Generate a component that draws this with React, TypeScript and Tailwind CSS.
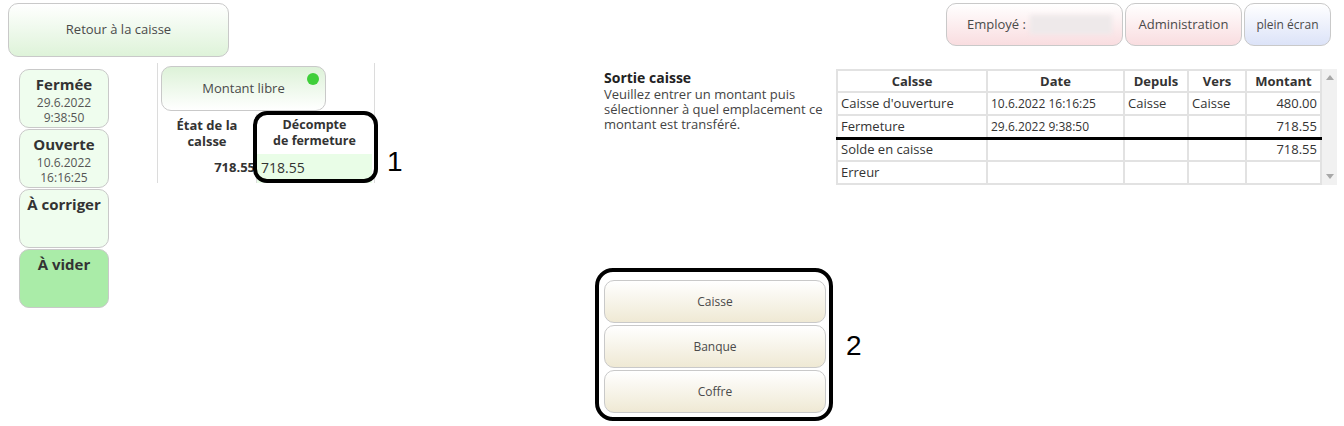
import React from 'react';

const statusItems = [
  { title: 'Fermée', lines: ['29.6.2022', '9:38:50'], active: false },
  { title: 'Ouverte', lines: ['10.6.2022', '16:16:25'], active: false },
  { title: 'À corriger', lines: [], active: false },
  { title: 'À vider', lines: [], active: true },
];

const rows = [
  { caisse: "Caisse d'ouverture", date: '10.6.2022 16:16:25', depuis: 'Caisse', vers: 'Caisse', montant: '480.00' },
  { caisse: 'Fermeture', date: '29.6.2022 9:38:50', depuis: '', vers: '', montant: '718.55' },
  { caisse: 'Solde en caisse', date: '', depuis: '', vers: '', montant: '718.55', thick: true },
  { caisse: 'Erreur', date: '', depuis: '', vers: '', montant: '' },
];

const cell = 'border-2 border-[#e2e2e2] px-[3px]';

export default function App() {
  return (
    <div className="relative w-[1344px] h-[426px] overflow-hidden bg-white text-[#333] font-['Open_Sans','Noto_Sans',sans-serif]">
      {/* header */}
      <div className="flex items-start justify-between h-[57px]">
        <button className="ml-[8px] mt-[3px] w-[221px] h-[54px] rounded-[10px] border border-[#c9c9c9] bg-linear-to-b from-white to-[#def3d9] text-[13px] text-[#4a4a4a]">
          Retour à la caisse
        </button>
        <div className="mt-[3px] mr-[13px] flex gap-[2px]">
          <button className="w-[177px] h-[43px] rounded-[10px] border border-[#c9c9c9] bg-linear-to-b from-white to-[#f9dde0] text-[13px] text-[#4a4a4a] flex items-center pl-[20px] gap-[4px]">
            Employé :
            <span className="inline-block w-[82px] h-[19px] bg-[#eee9ea] blur-[2px]" />
          </button>
          <button className="w-[117px] h-[43px] rounded-[10px] border border-[#c9c9c9] bg-linear-to-b from-white to-[#f9dde0] text-[13px] text-[#4a4a4a]">
            Administration
          </button>
          <button className="w-[87px] h-[43px] rounded-[10px] border border-[#c9c9c9] bg-linear-to-b from-white to-[#dce3f8] text-[12px] text-[#4a4a4a]">
            plein écran
          </button>
        </div>
      </div>

      <div className="flex mt-[6px]">
        {/* status column */}
        <div className="ml-[19px] mt-[6px] w-[90px] flex flex-col gap-px">
          {statusItems.map((s) => (
            <div
              key={s.title}
              className={`h-[59px] rounded-[10px] border border-[#c9c9c9] flex flex-col items-center pt-[3px] ${s.active ? 'bg-[#aaeca8]' : 'bg-[#effdee]'}`}
            >
              <span className="text-[15px] font-bold leading-[22px] text-[#333]">{s.title}</span>
              {s.lines.map((l) => (
                <span key={l} className="text-[12px] leading-[15px] text-[#555] first-of-type:mt-[2px]">{l}</span>
              ))}
            </div>
          ))}
        </div>

        {/* middle panel */}
        <div className="relative ml-[48px] w-[218px] h-[120px] border-l border-r border-[#dcdcdc]">
          <button className="relative ml-[3px] mt-[3px] w-[165px] h-[45px] rounded-[10px] border border-[#c9c9c9] bg-linear-to-b from-[#ddf2d8] to-white text-[13px] text-[#4a4a4a]">
            Montant libre
            <span className="absolute right-[6px] top-[6px] w-[12px] h-[12px] rounded-full bg-[#3fcf3a]" />
          </button>
          <div className="flex mt-[3px]">
            <div className="w-[99px] border-r border-[#dcdcdc] flex flex-col">
              <div className="h-[38px] text-[13px] font-bold leading-[16px] text-center pt-[3px]">
                État de la<br />calsse
              </div>
              <div className="h-[31px] text-[13px] font-bold text-right pr-[1px] pt-[6px]">718.55</div>
            </div>
            <div className="w-[115px] flex flex-col">
              <div className="h-[38px] text-[12.5px] font-bold leading-[16px] text-center pt-[3px]">
                Décompte<br />de fermeture
              </div>
              <div className="h-[29px] mt-[2px] bg-[#e9fde7] text-[14px] text-[#333] pl-[4px] pt-[3px]">718.55</div>
            </div>
          </div>
          {/* annotation 1 */}
          <div className="absolute left-[95px] top-[48px] w-[125px] h-[72px] rounded-[14px] border-[4px] border-black pointer-events-none" />
          <span className="absolute left-[229px] top-[85px] text-[28px] leading-none text-black font-['Liberation_Sans',sans-serif]">1</span>
        </div>

        {/* right side */}
        <div className="ml-[229px] flex flex-col">
          <div className="flex mt-[6px]">
            <div className="w-[232px]">
              <div className="text-[14px] font-bold leading-[18px] text-[#222]">Sortie caisse</div>
              <p className="text-[13px] leading-[15px] text-[#444]">
                Veuillez entrer un montant puis sélectionner à quel emplacement ce montant est transféré.
              </p>
            </div>
            <div className="flex">
              <table className="w-[486px] border-collapse text-[13px] text-[#333] leading-[15px]">
                <thead>
                  <tr className="h-[22px]">
                    <th className={`${cell} w-[150px] font-bold text-center`}>Calsse</th>
                    <th className={`${cell} w-[137px] font-bold text-center`}>Date</th>
                    <th className={`${cell} w-[64px] font-bold text-center`}>Depuls</th>
                    <th className={`${cell} w-[58px] font-bold text-center`}>Vers</th>
                    <th className={`${cell} font-bold text-center`}>Montant</th>
                  </tr>
                </thead>
                <tbody>
                  {rows.map((r) => (
                    <tr key={r.caisse} className="h-[23px]">
                      <td className={`${cell} ${r.thick ? 'border-t-black border-t-[3px]' : ''}`}>{r.caisse}</td>
                      <td className={`${cell} text-[12px] ${r.thick ? 'border-t-black border-t-[3px]' : ''}`}>{r.date}</td>
                      <td className={`${cell} ${r.thick ? 'border-t-black border-t-[3px]' : ''}`}>{r.depuis}</td>
                      <td className={`${cell} ${r.thick ? 'border-t-black border-t-[3px]' : ''}`}>{r.vers}</td>
                      <td className={`${cell} text-right ${r.thick ? 'border-t-black border-t-[3px]' : ''}`}>{r.montant}</td>
                    </tr>
                  ))}
                </tbody>
              </table>
              <div className="w-[15px] h-[116px] bg-[#f1f1f1] flex flex-col justify-between items-center py-[6px]">
                <svg width="8" height="5" viewBox="0 0 8 5"><path d="M0 5 L4 0 L8 5 Z" fill="#a8a8a8" /></svg>
                <svg width="8" height="5" viewBox="0 0 8 5"><path d="M0 0 L4 5 L8 0 Z" fill="#a8a8a8" /></svg>
              </div>
            </div>
          </div>

          <div className="relative mt-[95px] w-[222px] flex flex-col gap-[2px]">
            {['Caisse', 'Banque', 'Coffre'].map((b) => (
              <button
                key={b}
                className="h-[43px] rounded-[10px] border border-[#c9c9c9] bg-linear-to-b from-white to-[#efe9d4] text-[12px] text-[#4a4a4a]"
              >
                {b}
              </button>
            ))}
            {/* annotation 2 */}
            <div className="absolute -left-[9px] -top-[12px] w-[238px] h-[153px] rounded-[18px] border-[4px] border-black pointer-events-none" />
            <span className="absolute left-[242px] top-[52px] text-[28px] leading-none text-black font-['Liberation_Sans',sans-serif]">2</span>
          </div>
        </div>
      </div>
    </div>
  );
}
